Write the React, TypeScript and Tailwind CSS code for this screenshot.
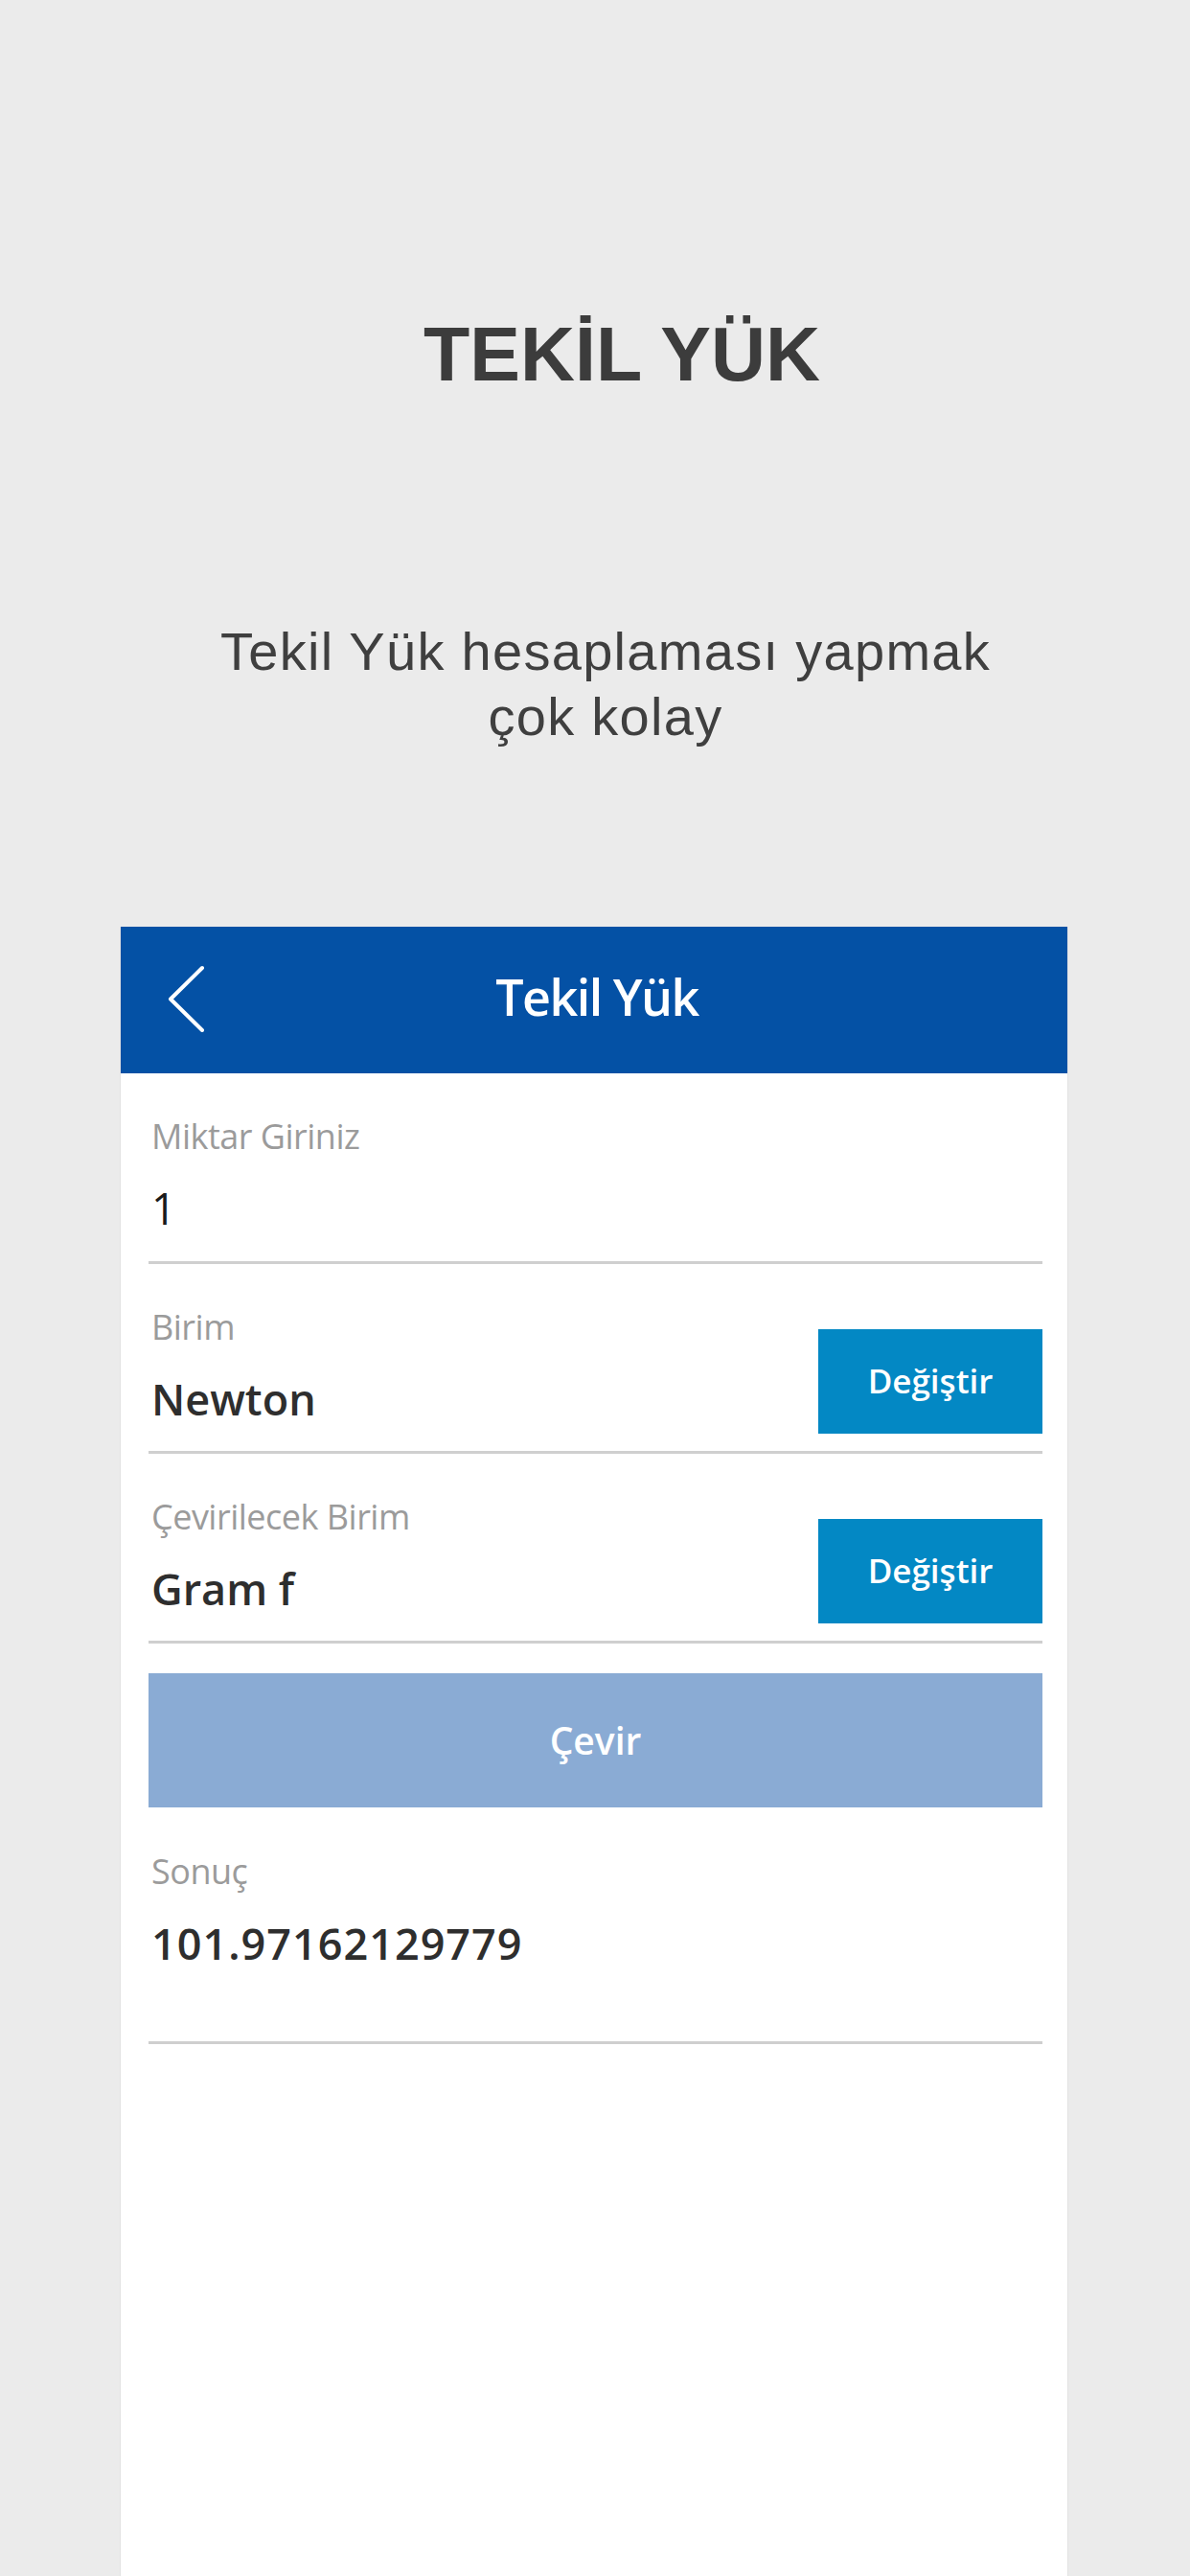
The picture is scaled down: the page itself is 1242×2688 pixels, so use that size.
import type { JSX } from 'react';

const sans = "font-['Open_Sans','Noto_Sans',sans-serif]";

type FieldProps = {
  label: string;
  value: string;
  bold?: boolean;
  action?: string;
  bottom?: string;
};

function BackIcon(): JSX.Element {
  return (
    <svg width="40" height="72" viewBox="0 0 40 72" fill="none" className="absolute left-[48px] top-[40px]">
      <path d="M37 3 L4 35.5 L37 68" stroke="white" strokeWidth="4" strokeLinecap="round" strokeLinejoin="round" />
    </svg>
  );
}

function Field({ label, value, bold = true, action, bottom = 'pb-[32px]' }: FieldProps): JSX.Element {
  return (
    <div className="flex items-start justify-between border-b-[3px] border-[#cfcfcf]">
      <div className={`flex flex-col pl-[3px] pt-[48px] ${bottom}`}>
        <span className="text-[36px] leading-[36px] tracking-[-0.5px] text-[#9b9b9b]">{label}</span>
        <span
          className={`mt-[34px] text-[45px] leading-[45px] ${bold ? 'font-semibold text-[#2e2e2e]' : 'font-normal text-[#1a1a1a]'}`}
        >
          {value}
        </span>
      </div>
      {action && (
        <button className="mt-[68px] flex h-[109px] w-[234px] items-center justify-center bg-[#0388c4] text-[35px] font-semibold text-white">
          {action}
        </button>
      )}
    </div>
  );
}

export default function App(): JSX.Element {
  return (
    <div className="flex h-[2688px] flex-col overflow-hidden bg-[#ebebeb]">
      <h1 className="mt-[331px] pl-[56px] text-center font-['Liberation_Sans',Arial,sans-serif] text-[79px] font-bold leading-[78px] text-[#3c3c3c]">
        TEKİL YÜK
      </h1>
      <p className="mt-[237px] pl-[22px] text-center font-['Liberation_Sans',Arial,sans-serif] text-[56px] leading-[68px] tracking-[1.3px] text-[#3f3f3f]">
        Tekil Yük hesaplaması yapmak
        <br />
        çok kolay
      </p>

      <div className={`ml-[125px] mt-[185px] flex w-[990px] flex-1 flex-col border-x border-[#e2e2e2] bg-white ${sans}`}>
        <div className="relative flex h-[153px] items-center justify-center bg-[#0451a5] pb-[8px] pl-[6px]">
          <BackIcon />
          <span className="text-[52px] font-semibold leading-[52px] tracking-[-1.5px] text-white">Tekil Yük</span>
        </div>

        <div className="flex flex-col pl-[29px] pr-[26px]">
          <Field label="Miktar Giriniz" value="1" bold={false} bottom="pb-[33px]" />
          <Field label="Birim" value="Newton" action="Değiştir" />
          <Field label="Çevirilecek Birim" value="Gram f" action="Değiştir" />

          <button className="mt-[31px] flex h-[140px] w-full items-center justify-center bg-[#8aabd4] text-[39px] font-semibold text-white">
            Çevir
          </button>

          <div className="flex flex-col border-b-[3px] border-[#cfcfcf] pb-[80px] pl-[3px] pt-[49px]">
            <span className="text-[36px] leading-[36px] tracking-[-0.5px] text-[#9b9b9b]">Sonuç</span>
            <span className="mt-[34px] text-[45px] font-semibold leading-[45px] tracking-[1px] text-[#2e2e2e]">
              101.97162129779
            </span>
          </div>
        </div>
      </div>
    </div>
  );
}
